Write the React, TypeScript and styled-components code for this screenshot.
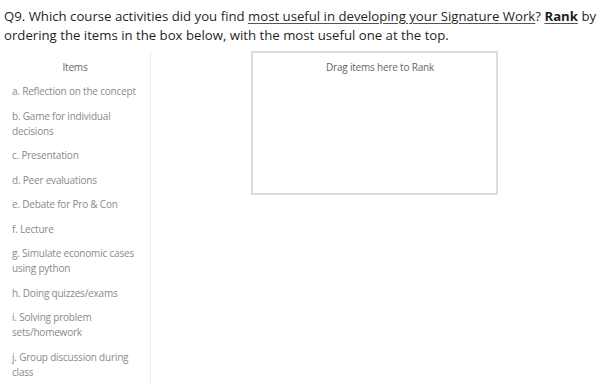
import React from 'react'
import styled, { createGlobalStyle } from 'styled-components'

const GlobalStyle = createGlobalStyle`
  html, body {
    margin: 0;
    padding: 0;
    background: #fff;
  }
  body {
    font-family: 'Open Sans', 'Liberation Sans', sans-serif;
  }
`

const ITEMS = [
  'a. Reflection on the concept',
  'b. Game for individual decisions',
  'c. Presentation',
  'd. Peer evaluations',
  'e. Debate for Pro & Con',
  'f. Lecture',
  'g. Simulate economic cases using python',
  'h. Doing quizzes/exams',
  'i. Solving problem sets/homework',
  'j. Group discussion during class',
]

const Page = styled.div`
  width: 602px;
  height: 384px;
  overflow: hidden;
`

const Question = styled.div`
  padding: 7px 4px 0 4px;
  font-size: 13.2px;
  line-height: 19px;
  color: #1f1f1f;

  u {
    text-decoration-color: #555;
    text-underline-offset: 2px;
  }
`

const Board = styled.div`
  display: grid;
  grid-template-columns: 151px 1fr;
  margin-top: 6px;
`

const ItemsColumn = styled.div`
  border-right: 1px solid #ececec;
  padding-bottom: 20px;
`

const ColumnHeader = styled.div`
  text-align: center;
  font-size: 10px;
  letter-spacing: -0.2px;
  color: #666;
  padding: 9px 0 5px;
`

const ItemList = styled.ul`
  list-style: none;
  margin: 0;
  padding: 0;
`

const Item = styled.li`
  padding: 5px 12px 4.5px 12px;
  font-size: 10px;
  letter-spacing: -0.2px;
  line-height: 15px;
  color: #8a8a8a;
`

const DropArea = styled.div`
  display: flex;
  justify-content: center;
`

const DropBox = styled.div`
  width: 243px;
  height: 140px;
  border: 2px solid #dcdcdc;
  margin-left: -5px;
`

const DropHeader = styled.div`
  text-align: center;
  font-size: 10px;
  letter-spacing: -0.2px;
  color: #666;
  padding: 7px 0 0 12px;
`

export default function App() {
  return (
    <Page>
      <GlobalStyle />
      <Question>
        Q9. Which course activities did you find{' '}
        <u>most useful in developing your Signature Work</u>?{' '}
        <u>
          <b>Rank</b>
        </u>{' '}
        by ordering the items in the box below, with the most useful one at the top.
      </Question>
      <Board>
        <ItemsColumn>
          <ColumnHeader>Items</ColumnHeader>
          <ItemList>
            {ITEMS.map((item) => (
              <Item key={item}>{item}</Item>
            ))}
          </ItemList>
        </ItemsColumn>
        <DropArea>
          <DropBox>
            <DropHeader>Drag items here to Rank</DropHeader>
          </DropBox>
        </DropArea>
      </Board>
    </Page>
  )
}
